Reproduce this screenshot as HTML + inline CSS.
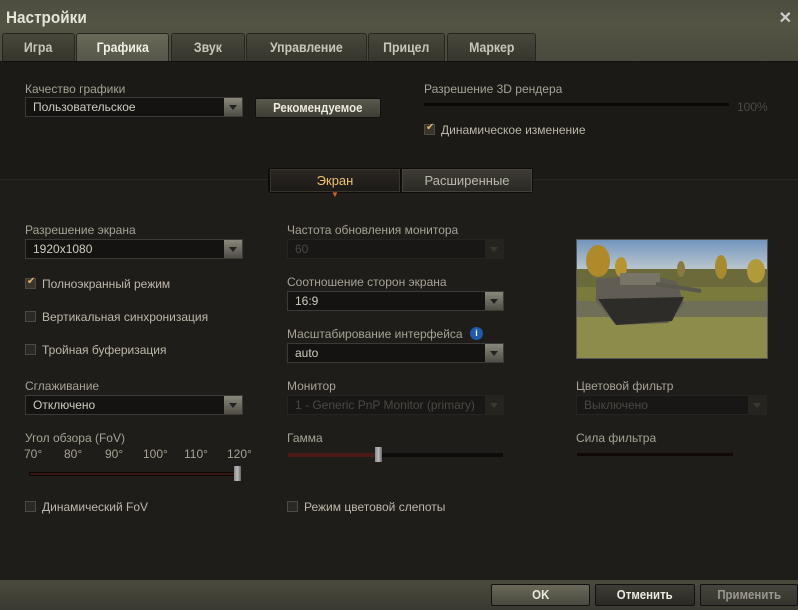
<!DOCTYPE html>
<html><head><meta charset="utf-8"><style>
*{margin:0;padding:0;box-sizing:border-box}
body{width:798px;height:610px;overflow:hidden;background:#3f3f35;font-family:"Liberation Sans",sans-serif;font-size:12px;color:#bdb7aa;position:relative}
.abs{position:absolute}
.title{left:0;top:0;width:798px;height:62px;background:linear-gradient(#4d4c40,#545444 40%,#49493d)}
.title h1{position:absolute;left:6px;top:8px;font-size:17px;color:#e6e3d8;font-weight:bold;transform:scaleX(.9);transform-origin:left}
.tab{top:33px;height:28px;background:linear-gradient(#48483c,#35352d);border:1px solid #26261f;border-bottom:none;border-radius:3px 3px 0 0;color:#c9c6ba;font-weight:bold;font-size:14px;text-align:center;line-height:27px}
.tab span,.btn span{display:inline-block;transform:scaleX(.88)}
.tab.act{background:linear-gradient(#6a6a58,#55554a);color:#f2f0e6}
.panel{left:0;top:61px;width:798px;height:519px;background:#1f1d1a;border-top:1px solid #111}
.upper{left:0;top:62px;width:798px;height:118px;background:#1b1a17;border-bottom:1px solid #2a2824}
.lbl{font-size:12px;color:#a7a295}
.dd{height:20px;background:#141311;border:1px solid #3c3a34;color:#cfcbc0;font-size:12px;line-height:18px;padding-left:7px}
.dd .ar{position:absolute;right:0;top:0;width:18px;height:18px;background:linear-gradient(#8a877b,#4f4d45);}
.dd .ar:after{content:"";position:absolute;left:5px;top:7px;border-left:4px solid transparent;border-right:4px solid transparent;border-top:5px solid #222}
.dd.dis{color:#4b4842;background:#181715;border-color:#262420}
.dd.dis .ar{background:#25241f}
.dd.dis .ar:after{border-top-color:#3a3833}
.cb{width:11px;height:11px;border:1px solid #4c4a43;background:#2a2925}
.cb.on{background:#3a342a}
.cb.on:after{content:"✔";position:absolute;left:1px;top:-3px;font-size:10px;color:#e3b56a}
.btn{border:1px solid #111;border-radius:2px;color:#ece9df;font-weight:bold;text-align:center;font-size:13px}
.foot{left:0;top:580px;width:798px;height:30px;background:linear-gradient(#4a4a3e,#3a3a31)}
</style></head><body>
<div class="abs title"><h1>Настройки</h1>
<div class="abs" style="right:6px;top:8px;font-size:16px;color:#ccc;font-weight:bold">✕</div></div>
<div class="abs tab" style="left:2px;width:73px"><span>Игра</span></div>
<div class="abs tab act" style="left:76px;width:93px"><span>Графика</span></div>
<div class="abs tab" style="left:171px;width:74px"><span>Звук</span></div>
<div class="abs tab" style="left:246px;width:121px"><span>Управление</span></div>
<div class="abs tab" style="left:368px;width:77px"><span>Прицел</span></div>
<div class="abs tab" style="left:447px;width:89px"><span>Маркер</span></div>
<div class="abs panel"></div>
<div class="abs upper"></div>

<div class="abs lbl" style="left:25px;top:82px">Качество графики</div>
<div class="abs dd" style="left:25px;top:97px;width:218px">Пользовательское<div class="ar"></div></div>
<div class="abs btn" style="left:255px;top:98px;width:126px;height:20px;line-height:18px;background:linear-gradient(#5a594d,#3e3d35)"><span>Рекомендуемое</span></div>

<div class="abs lbl" style="left:424px;top:82px">Разрешение 3D рендера</div>
<div class="abs" style="left:424px;top:103px;width:305px;height:3px;background:#0b0a09"></div>
<div class="abs" style="left:737px;top:100px;color:#4d4a44">100%</div>
<div class="abs cb on" style="left:424px;top:124px"></div>
<div class="abs" style="left:441px;top:123px;color:#bdb7aa">Динамическое изменение</div>

<div class="abs" style="left:268px;top:168px;width:265px;height:25px;background:#0d0c0b;border-radius:3px"></div>
<div class="abs" style="left:270px;top:169px;width:130px;height:23px;background:linear-gradient(#2a2722,#1c1a17);border:1px solid #3a352c;color:#f0c070;font-size:13px;text-align:center;line-height:21px">Экран</div>
<div class="abs" style="left:331px;top:190px;color:#d4602a;font-size:8px">▼</div>
<div class="abs" style="left:402px;top:169px;width:130px;height:23px;background:linear-gradient(#3d3b33,#2a2924);border:1px solid #45433b;color:#bcb8ac;font-size:13px;text-align:center;line-height:21px">Расширенные</div>

<div class="abs lbl" style="left:25px;top:223px">Разрешение экрана</div>
<div class="abs dd" style="left:25px;top:239px;width:218px">1920x1080<div class="ar"></div></div>
<div class="abs cb on" style="left:25px;top:278px"></div>
<div class="abs" style="left:42px;top:277px">Полноэкранный режим</div>
<div class="abs cb" style="left:25px;top:311px"></div>
<div class="abs" style="left:42px;top:310px">Вертикальная синхронизация</div>
<div class="abs cb" style="left:25px;top:344px"></div>
<div class="abs" style="left:42px;top:343px">Тройная буферизация</div>
<div class="abs lbl" style="left:25px;top:379px">Сглаживание</div>
<div class="abs dd" style="left:25px;top:395px;width:218px">Отключено<div class="ar"></div></div>
<div class="abs lbl" style="left:25px;top:431px">Угол обзора (FoV)</div>
<div class="abs lbl" style="left:24px;top:447px">70°</div>
<div class="abs lbl" style="left:64px;top:447px">80°</div>
<div class="abs lbl" style="left:105px;top:447px">90°</div>
<div class="abs lbl" style="left:143px;top:447px">100°</div>
<div class="abs lbl" style="left:184px;top:447px">110°</div>
<div class="abs lbl" style="left:227px;top:447px">120°</div>
<div class="abs" style="left:29px;top:472px;width:210px;height:4px;background:#3a1612;border:1px solid #0a0908"></div>
<div class="abs" style="left:234px;top:466px;width:7px;height:15px;background:linear-gradient(90deg,#888,#bbb,#666)"></div>
<div class="abs cb" style="left:25px;top:501px"></div>
<div class="abs" style="left:42px;top:500px">Динамический FoV</div>

<div class="abs lbl" style="left:287px;top:223px">Частота обновления монитора</div>
<div class="abs dd dis" style="left:287px;top:239px;width:217px">60<div class="ar"></div></div>
<div class="abs lbl" style="left:287px;top:275px">Соотношение сторон экрана</div>
<div class="abs dd" style="left:287px;top:291px;width:217px">16:9<div class="ar"></div></div>
<div class="abs lbl" style="left:287px;top:327px">Масштабирование интерфейса</div>
<div class="abs" style="left:470px;top:327px;width:13px;height:13px;border-radius:50%;background:#1f5aa8;color:#fff;font-size:9px;text-align:center;line-height:13px;font-weight:bold">i</div>
<div class="abs dd" style="left:287px;top:343px;width:217px">auto<div class="ar"></div></div>
<div class="abs lbl" style="left:287px;top:379px">Монитор</div>
<div class="abs dd dis" style="left:287px;top:395px;width:217px">1 - Generic PnP Monitor (primary)<div class="ar"></div></div>
<div class="abs lbl" style="left:287px;top:431px">Гамма</div>
<div class="abs" style="left:288px;top:453px;width:215px;height:4px;background:#0e0d0c"></div>
<div class="abs" style="left:288px;top:453px;width:90px;height:4px;background:#4a1a14"></div>
<div class="abs" style="left:375px;top:447px;width:7px;height:15px;background:linear-gradient(90deg,#888,#bbb,#666)"></div>
<div class="abs cb" style="left:287px;top:501px"></div>
<div class="abs" style="left:304px;top:500px">Режим цветовой слепоты</div>

<svg class="abs" style="left:576px;top:239px" width="192" height="120" viewBox="0 0 192 120">
<defs><linearGradient id="s" x1="0" y1="0" x2="0" y2="1"><stop offset="0" stop-color="#7094bd"/><stop offset="1" stop-color="#c4ccd0"/></linearGradient></defs>
<rect width="192" height="120" fill="#7a7a44"/>
<rect width="192" height="34" fill="url(#s)"/>
<rect y="30" width="192" height="22" fill="#6a6a3a"/>
<rect y="48" width="192" height="16" fill="#7a7a3c"/>
<ellipse cx="22" cy="22" rx="12" ry="16" fill="#b08a2a"/><ellipse cx="45" cy="28" rx="6" ry="10" fill="#b69430"/><ellipse cx="145" cy="28" rx="6" ry="12" fill="#a88a30"/><ellipse cx="180" cy="32" rx="9" ry="12" fill="#b09a3a"/><ellipse cx="105" cy="30" rx="4" ry="8" fill="#8a7a40"/>
<rect y="62" width="192" height="18" fill="#6f6e56"/>
<rect y="78" width="192" height="42" fill="#8e8c4a"/>
<path d="M20 40 L70 36 L100 42 L108 64 L92 84 L40 86 L20 62 Z" fill="#615d55"/>
<path d="M22 60 L108 58 L96 82 L40 86 Z" fill="#2e2c29"/>
<rect x="44" y="34" width="40" height="12" fill="#797468"/>
<path d="M80 45 L125 52" stroke="#5a574f" stroke-width="4"/>
</svg>
<div class="abs" style="left:576px;top:239px;width:192px;height:120px;border:1px solid #555"></div>
<div class="abs lbl" style="left:576px;top:379px">Цветовой фильтр</div>
<div class="abs dd dis" style="left:576px;top:395px;width:191px">Выключено<div class="ar"></div></div>
<div class="abs lbl" style="left:576px;top:431px">Сила фильтра</div>
<div class="abs" style="left:577px;top:453px;width:156px;height:3px;background:#120808"></div>

<div class="abs foot"></div>
<div class="abs btn" style="left:491px;top:584px;width:99px;height:22px;line-height:20px;background:linear-gradient(#6a695a,#4a493f)"><span>OK</span></div>
<div class="abs btn" style="left:595px;top:584px;width:100px;height:22px;line-height:20px;background:linear-gradient(#3e3d35,#2a2924)"><span>Отменить</span></div>
<div class="abs btn" style="left:700px;top:584px;width:98px;height:22px;line-height:20px;background:linear-gradient(#45443c,#35342e);color:#9a978d"><span>Применить</span></div>
</body></html>
